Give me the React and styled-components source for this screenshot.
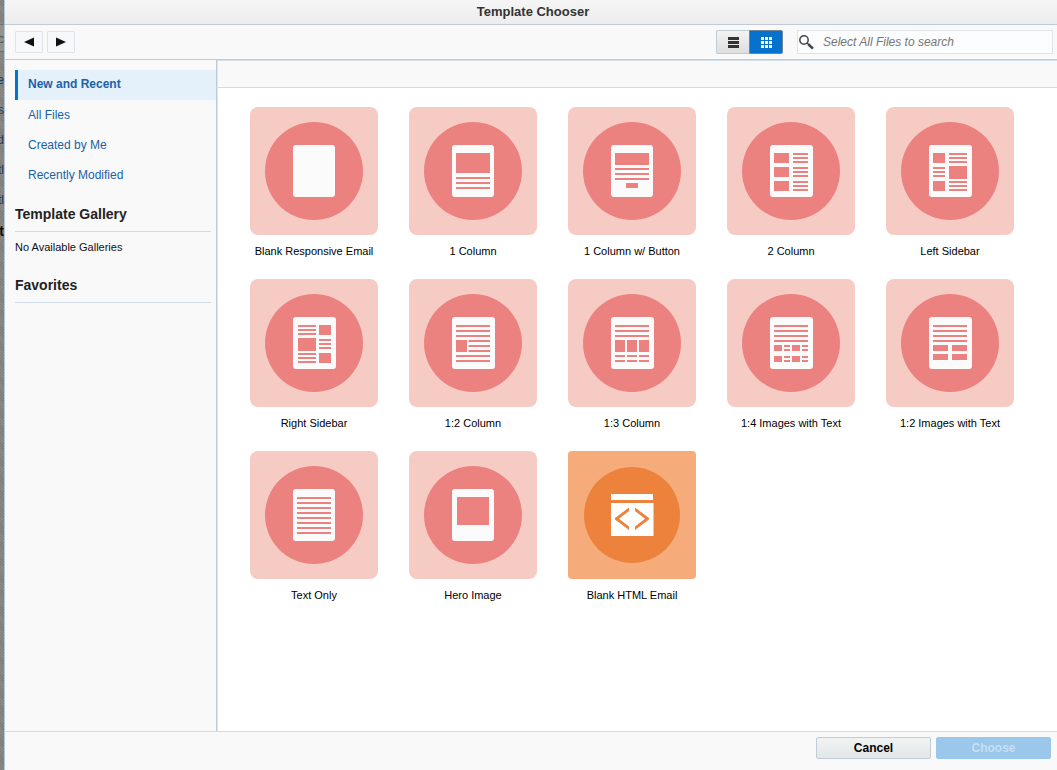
import React, { useState } from 'react'
import styled, { createGlobalStyle } from 'styled-components'

const GlobalStyle = createGlobalStyle`
    * {
        box-sizing: border-box;
    }
    body {
        margin: 0;
        font-family: "Liberation Sans", Arial, sans-serif;
        font-size: 12px;
        color: #000;
    }
    button, input {
        font-family: inherit;
    }
`

const Page = styled.div`
    display: flex;
    min-height: 100vh;
`

const Behind = styled.div`
    width: 4px;
    flex: none;
    overflow: hidden;
    display: flex;
    flex-direction: column;
    padding-top: 24px;
    background: repeating-linear-gradient(45deg, #8c8a87 0px, #8c8a87 1px, #7f7d7b 1px, #7f7d7b 2px);
`

const BehindRow = styled.div`
    height: 30px;
    flex: none;
    display: flex;
    justify-content: flex-end;
    font-size: ${props => props.$strong ? "14px" : "12px"};
    font-weight: ${props => props.$strong ? "bold" : "normal"};
    line-height: ${props => props.$strong ? "32px" : "30px"};
    color: ${props => props.color};
`

const BehindField = styled(BehindRow)`
    height: 28px;
    margin-bottom: 13px;
    border-top: 1px solid #6f7377;
    border-bottom: 1px solid #6f7377;
    background-color: #92938e;
    line-height: 28px;
`

const Dialog = styled.div`
    flex: 1;
    min-width: 0;
    display: flex;
    flex-direction: column;
    border-left: 1px solid #b9c6d2;
    background-color: #f9f9f9;
`

const TitleBar = styled.header`
    height: 25px;
    padding-left: 4px;
    border-bottom: 1px solid #bfcbd8;
    background: linear-gradient(#f5f5f5, #ededed);
`

const Title = styled.h1`
    margin: 0;
    font-size: 13px;
    line-height: 24px;
    text-align: center;
    color: #333;
`

const Toolbar = styled.div`
    display: flex;
    align-items: center;
    height: 35px;
    padding: 0 4px 0 10px;
    border-bottom: 1px solid #c2c9d0;
`

const NavButton = styled.button`
    width: 28px;
    height: 22px;
    margin-right: 4px;
    padding: 0;
    display: flex;
    align-items: center;
    justify-content: center;
    border: 1px solid #dfe4ec;
    border-radius: 1px;
    background-color: #f7f8fa;
    cursor: pointer;
`

const ViewSwitch = styled.div`
    display: flex;
    margin-left: auto;
    margin-right: 14px;
`

const ViewButton = styled.button`
    width: ${props => props.$active ? "34px" : "33px"};
    height: 24px;
    padding: 0;
    display: flex;
    align-items: center;
    justify-content: center;
    border: 1px solid ${props => props.$active ? "#6f8496" : "#bfcbd6"};
    border-right-width: ${props => props.$active ? "1px" : "0"};
    border-radius: ${props => props.$active ? "0 2px 2px 0" : "2px 0 0 2px"};
    background: ${props => props.$active ? "#0572ce" : "linear-gradient(#f3f3f3, #dedede)"};
    color: ${props => props.$active ? "#fff" : "#333"};
    cursor: pointer;
`

const SearchBox = styled.label`
    display: flex;
    align-items: center;
    width: 256px;
    height: 24px;
    padding-left: 1px;
    border: 1px solid #dfe4e7;
    background-color: #fcfdfe;
`

const SearchInput = styled.input`
    flex: 1;
    min-width: 0;
    height: 22px;
    padding: 0;
    margin-left: 9px;
    border: none;
    outline: none;
    background: transparent;
    font-size: 12px;
    font-style: italic;
    &::placeholder {
        color: #757575;
        opacity: 1;
    }
`

const Body = styled.div`
    flex: 1;
    display: flex;
`

const Sidebar = styled.aside`
    width: 212px;
    flex: none;
    padding: 10px 0 0 10px;
    border-right: 1px solid #bdcbd8;
`

const NavLink = styled.a`
    display: block;
    height: 30px;
    padding-left: 10px;
    border-left: 3px solid ${props => props.$active ? "#0572ce" : "transparent"};
    background-color: ${props => props.$active ? "#e4f0fa" : "transparent"};
    font-weight: ${props => props.$active ? "bold" : "normal"};
    line-height: ${props => props.$active ? "29px" : "31px"};
    color: #1a62a8;
    text-decoration: none;
`

const SectionTitle = styled.h2`
    margin: 0 5px 0 0;
    padding-top: ${props => props.$first ? "7px" : "13px"};
    border-bottom: 1px solid #cfdbe5;
    font-size: 14px;
    line-height: 34px;
    color: #222;
`

const Note = styled.p`
    margin: 0;
    padding-top: 7px;
    font-size: 11px;
    line-height: 16px;
    color: #111;
`

const Main = styled.main`
    flex: 1;
    min-width: 0;
    border-left: 1px solid #dbe5ee;
    background-color: #fff;
`

const MainHeader = styled.div`
    height: 28px;
    border-top: 1px solid #d3dfe9;
    border-bottom: 1px solid #cfdbe5;
    background-color: #f9f9f9;
`

const Grid = styled.div`
    display: grid;
    grid-template-columns: repeat(auto-fill, 128px);
    gap: 20px 31px;
    padding: 19px 32px;
`

const TemplateButton = styled.button`
    display: flex;
    flex-direction: column;
    align-items: center;
    gap: 8px;
    padding: 0;
    border: none;
    background: none;
    font-size: 11px;
    line-height: 16px;
    color: #000;
    white-space: nowrap;
    cursor: pointer;
`

const Thumb = styled.svg`
    display: block;
    width: 128px;
    height: 128px;
`

const Footer = styled.footer`
    display: flex;
    justify-content: flex-end;
    gap: 5px;
    height: 39px;
    padding: 5px 6px;
    border-top: 1px solid #cfdbe5;
`

const Button = styled.button`
    width: 115px;
    height: 22px;
    padding: 0;
    border: 1px solid ${props => props.$primary ? "#9bc7eb" : "#c1ccd6"};
    border-radius: 2px;
    background: ${props => props.$primary ? "#9bc7eb" : "linear-gradient(#f1f3f3, #e3e7e8)"};
    font-size: 12px;
    font-weight: bold;
    color: ${props => props.$primary ? "#c5dff4" : "#000"};
`

const behindRows = [
  { text: "e", color: "#123f66" },
  { text: "s", color: "#123f66" },
  { text: "d", color: "#2a3563" },
  { text: "tl", color: "#2a3563" },
  { text: "tl", color: "#2a3563" },
  { text: "t", color: "#111", strong: true },
]

const links = ["New and Recent", "All Files", "Created by Me", "Recently Modified"]

// a stack of text lines, 2px thick each
const lines = (x, width, ...tops) => tops.map((y) => [x, y, width, 2])

// blocks are [x, y, width, height] inside the white sheet
const templates = [
  { name: "Blank Responsive Email", sheet: 42, blocks: [] },
  { name: "1 Column", sheet: 42, blocks: [[4, 8, 34, 20], ...lines(4, 34, 32, 37, 42)] },
  { name: "1 Column w/ Button", sheet: 42, blocks: [[4, 8, 34, 12], ...lines(4, 34, 23, 28, 33), [15, 38, 12, 5]] },
  {
    name: "2 Column",
    sheet: 43,
    blocks: [
      [4, 8, 15, 10], [4, 22, 15, 10], [4, 36, 15, 10],
      ...lines(23, 15, 8, 12, 16, 22, 26, 30, 36, 40, 44),
    ],
  },
  {
    name: "Left Sidebar",
    sheet: 43,
    blocks: [
      [4, 8, 12, 10], ...lines(4, 12, 22, 26, 30), [4, 36, 12, 10],
      ...lines(20, 18, 8, 12, 16, 36, 40, 44), [20, 21, 18, 13],
    ],
  },
  {
    name: "Right Sidebar",
    sheet: 43,
    blocks: [
      ...lines(5, 18, 8, 12, 16, 36, 40, 44), [5, 21, 18, 13],
      [26, 8, 12, 10], ...lines(26, 12, 22, 26, 30), [26, 36, 12, 10],
    ],
  },
  {
    name: "1:2 Column",
    sheet: 43,
    blocks: [...lines(4, 34, 8, 13, 18, 38, 43), [4, 23, 11, 12], ...lines(16.5, 21.5, 23, 28, 33)],
  },
  {
    name: "1:3 Column",
    sheet: 43,
    blocks: [
      ...lines(4, 34, 8, 13, 18),
      [4, 23, 10, 12], [16, 23, 10, 12], [28, 23, 10, 12],
      ...lines(4, 10, 38, 43), ...lines(16, 10, 38, 43), ...lines(28, 10, 38, 43),
    ],
  },
  {
    name: "1:4 Images with Text",
    sheet: 43,
    blocks: [
      ...lines(4, 34, 8, 13, 18, 23),
      [4, 28, 8, 6], [22, 28, 8, 6], [4, 39, 8, 6], [22, 39, 8, 6],
      ...lines(14, 6, 28, 32, 39, 43), ...lines(32, 6, 28, 32, 39, 43),
    ],
  },
  {
    name: "1:2 Images with Text",
    sheet: 43,
    blocks: [
      ...lines(4, 34, 8, 13, 18, 23),
      [4, 28, 15, 6], [23, 28, 15, 6], [4, 37, 15, 6], [23, 37, 15, 6],
    ],
  },
  { name: "Text Only", sheet: 42, blocks: lines(4, 34, 8, 13, 18, 23, 28, 33, 38, 43) },
  { name: "Hero Image", sheet: 42, blocks: [[5, 8, 32, 28]] },
  { name: "Blank HTML Email", html: true },
]

const SheetThumb = ({ sheet, blocks }) => (
  <Thumb viewBox="0 0 128 128" aria-hidden="true">
    <rect width="128" height="128" rx="8" fill="#f6cbc3" />
    <circle cx="64" cy="64" r="49" fill="#eb8280" />
    <g transform="translate(43 38)">
      <rect width={sheet} height="52" rx="3" fill="#fbfbfb" />
      {blocks.map(([x, y, width, height]) => (
        <rect key={`${x}-${y}`} x={x} y={y} width={width} height={height} fill="#eb8280" />
      ))}
    </g>
  </Thumb>
)

const HtmlThumb = () => (
  <Thumb viewBox="0 0 128 128" aria-hidden="true">
    <rect width="128" height="128" rx="4" fill="#f5ac7a" />
    <circle cx="64" cy="64" r="48" fill="#ed823d" />
    <rect x="43" y="43" width="42" height="6" fill="#fff" />
    <rect x="43" y="52" width="42.5" height="33" fill="#fff" />
    <path d="M61 56.5V60L51 67.7L61 75.5V79L47 68.5V67Z" fill="#ed823d" />
    <path d="M67 56.5V60L77 67.7L67 75.5V79L81 68.5V67Z" fill="#ed823d" />
  </Thumb>
)

const App = () => {

  const [active, setActive] = useState("New and Recent")
  const [view, setView] = useState("grid")

  const handleLink = (e, name) => {
    e.preventDefault()
    setActive(name)
  }

  return (
    <Page>
      <GlobalStyle />
      <Behind aria-hidden="true">
        <BehindField color="#4d5a63">c</BehindField>
        {behindRows.map((row, i) => (
          <BehindRow key={i} color={row.color} $strong={row.strong}>{row.text}</BehindRow>
        ))}
      </Behind>
      <Dialog role="dialog" aria-labelledby="chooser-title">
        <TitleBar>
          <Title id="chooser-title">Template Chooser</Title>
        </TitleBar>
        <Toolbar>
          <NavButton aria-label="Back">
            <svg width="10" height="10" viewBox="0 0 10 10"><path d="M10 0.5V9.5L0 5Z" fill="#111" /></svg>
          </NavButton>
          <NavButton aria-label="Forward">
            <svg width="10" height="10" viewBox="0 0 10 10"><path d="M0 0.5V9.5L10 5Z" fill="#111" /></svg>
          </NavButton>
          <ViewSwitch>
            <ViewButton aria-label="List view" $active={view === "list"} onClick={() => setView("list")}>
              <svg width="11" height="11" viewBox="0 0 11 11" fill="currentColor">
                <path d="M0 0H11V3H0ZM0 4H11V7H0ZM0 8H11V11H0Z" />
              </svg>
            </ViewButton>
            <ViewButton aria-label="Grid view" $active={view === "grid"} onClick={() => setView("grid")}>
              <svg width="11" height="11" viewBox="0 0 11 11" fill="currentColor">
                <path d="M0 0H3V3H0ZM4 0H7V3H4ZM8 0H11V3H8ZM0 4H3V7H0ZM4 4H7V7H4ZM8 4H11V7H8ZM0 8H3V11H0ZM4 8H7V11H4ZM8 8H11V11H8Z" />
              </svg>
            </ViewButton>
          </ViewSwitch>
          <SearchBox>
            <svg width="15" height="15" viewBox="0 0 15 15" fill="none" stroke="#444">
              <circle cx="5" cy="5" r="4.2" strokeWidth="1.5" />
              <path d="M8 8L10 9.8" strokeWidth="1.5" />
              <path d="M9.3 9.2L14 13.6" strokeWidth="2.6" />
            </svg>
            <SearchInput type="text" aria-label="Search" placeholder="Select All Files to search" />
          </SearchBox>
        </Toolbar>
        <Body>
          <Sidebar>
            <nav>
              {links.map((name) => (
                <NavLink key={name} href="#" $active={active === name} onClick={(e) => handleLink(e, name)}>
                  {name}
                </NavLink>
              ))}
            </nav>
            <SectionTitle $first>Template Gallery</SectionTitle>
            <Note>No Available Galleries</Note>
            <SectionTitle>Favorites</SectionTitle>
          </Sidebar>
          <Main>
            <MainHeader />
            <Grid>
              {templates.map((item) => (
                <TemplateButton key={item.name}>
                  {item.html ? <HtmlThumb /> : <SheetThumb sheet={item.sheet} blocks={item.blocks} />}
                  <span>{item.name}</span>
                </TemplateButton>
              ))}
            </Grid>
          </Main>
        </Body>
        <Footer>
          <Button>Cancel</Button>
          <Button $primary disabled>Choose</Button>
        </Footer>
      </Dialog>
    </Page>
  )
}

export default App
